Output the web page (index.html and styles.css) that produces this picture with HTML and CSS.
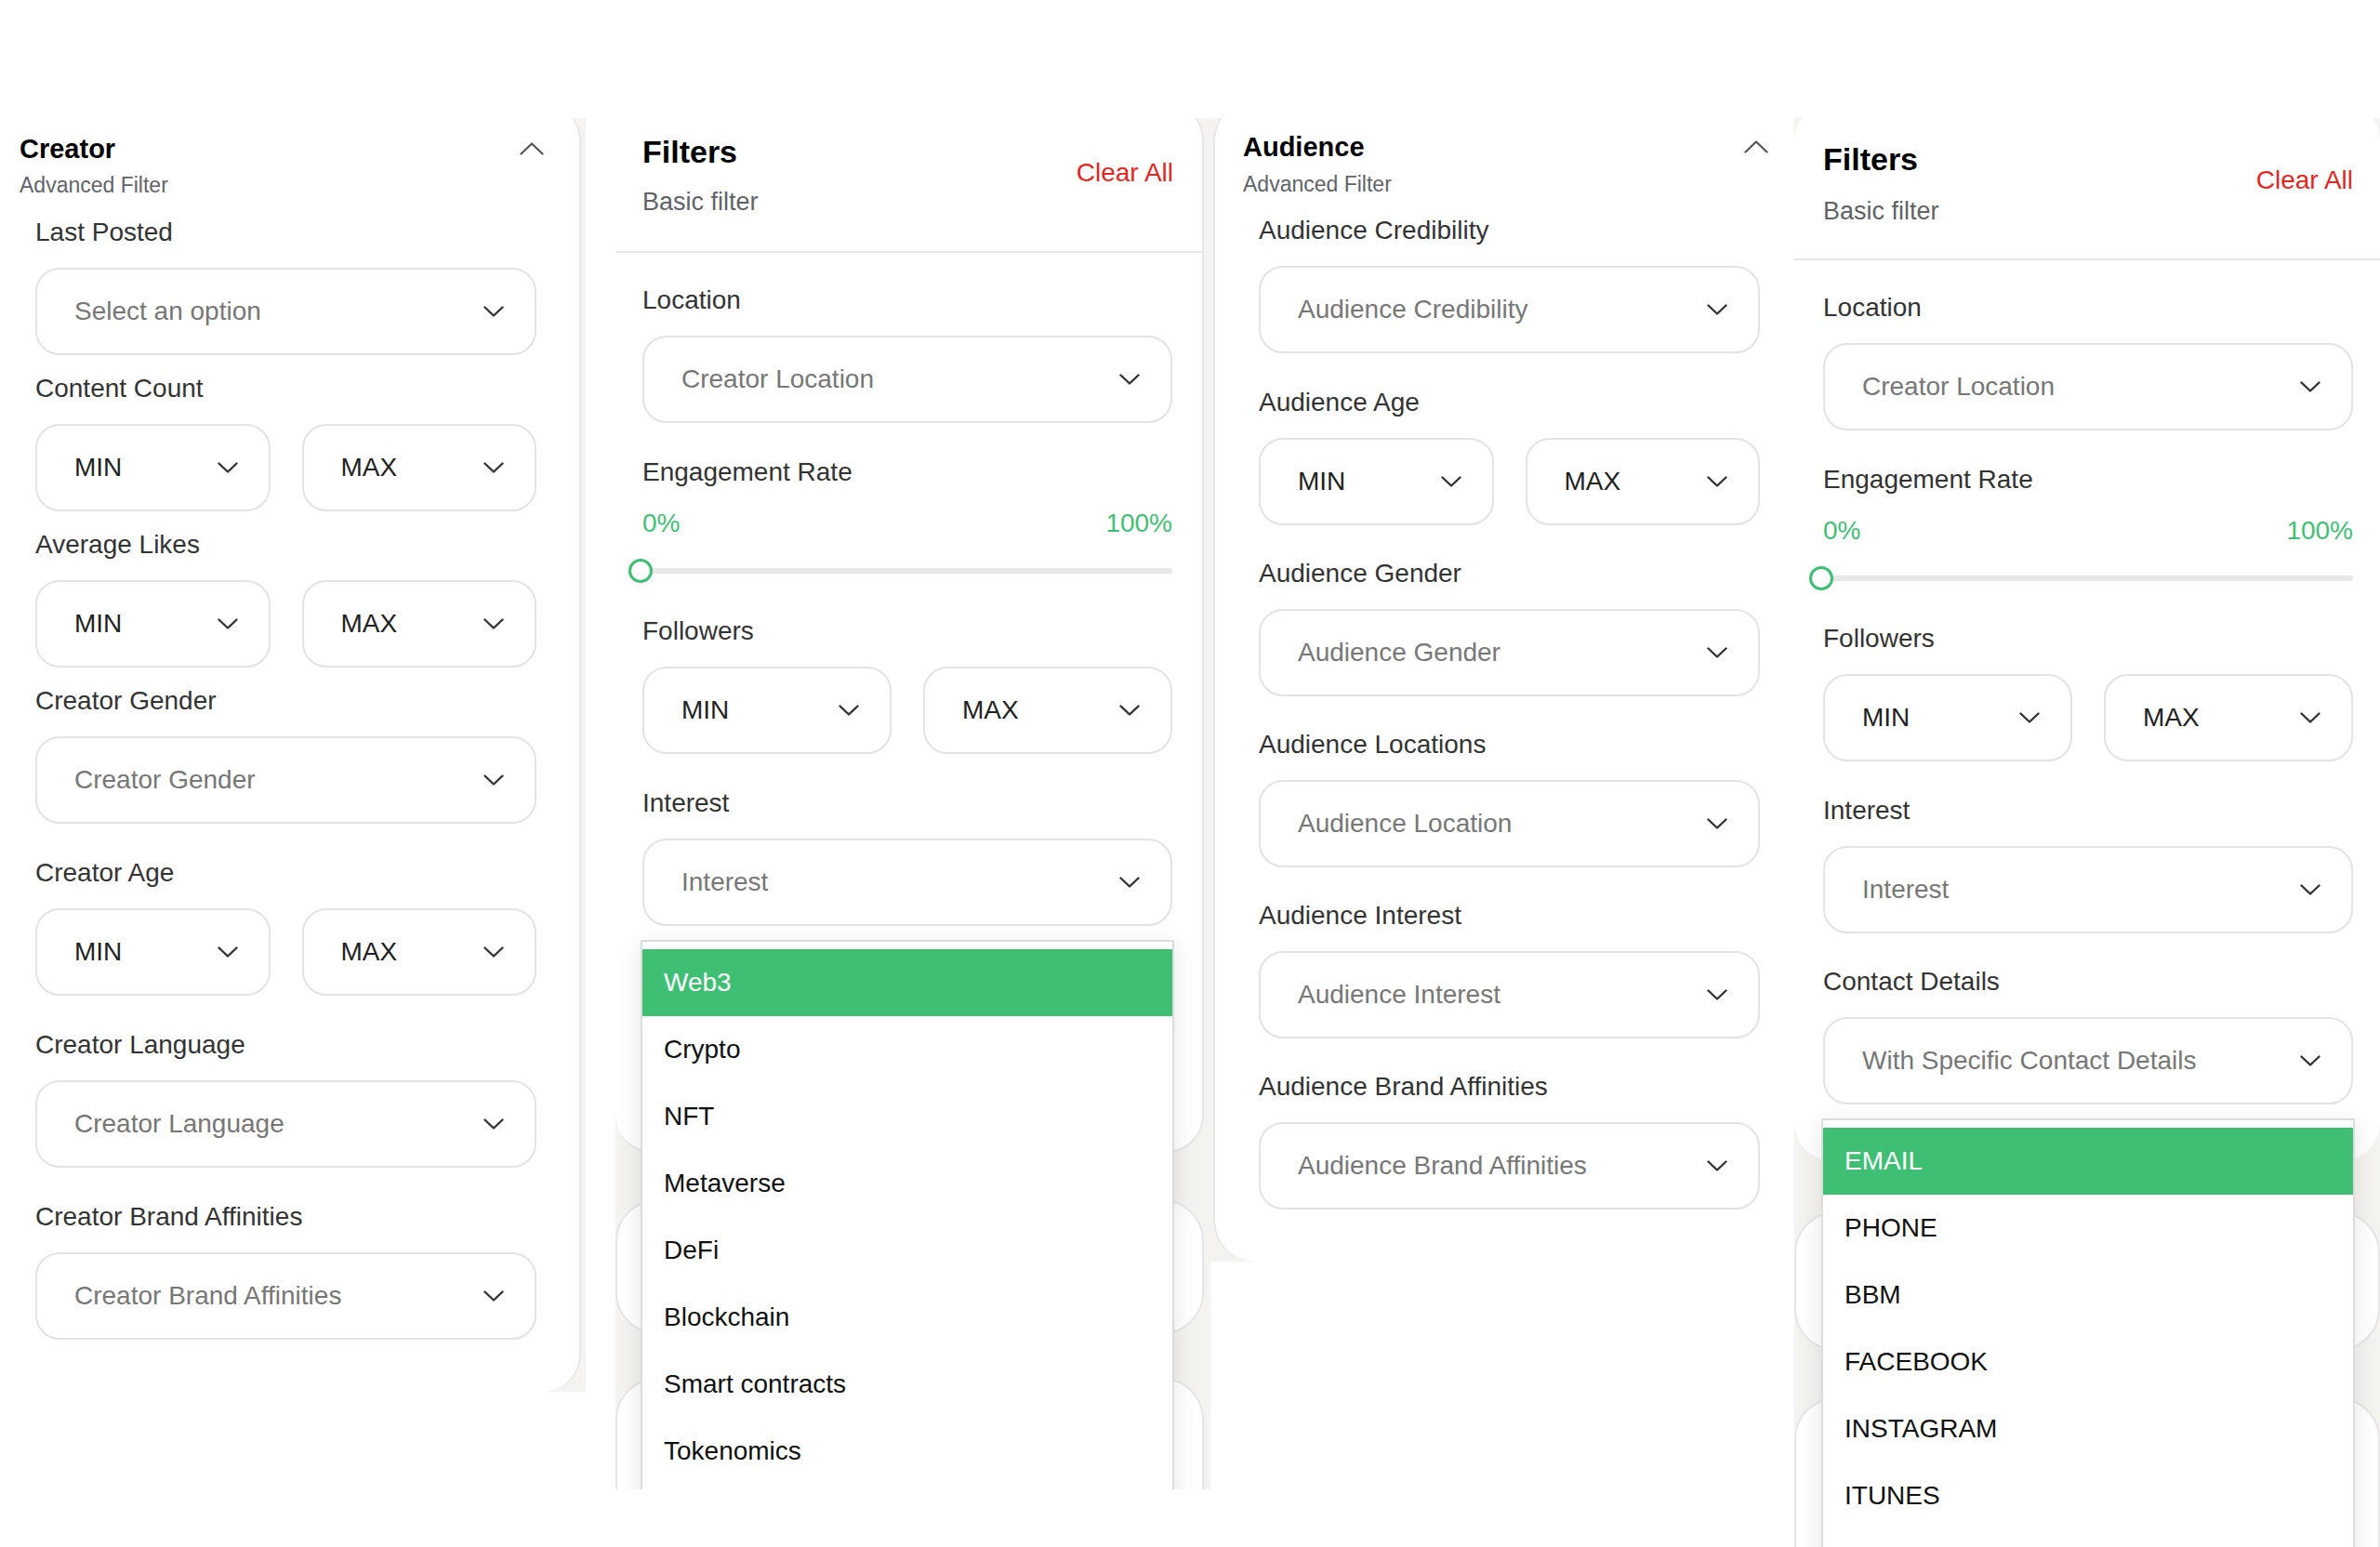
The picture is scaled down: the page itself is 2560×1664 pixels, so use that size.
FILE: index.html
```html
<!DOCTYPE html>
<html lang="en">
<head>
<meta charset="utf-8">
<title>Filters</title>
<link rel="stylesheet" href="styles.css">
</head>
<body>
<div class="board">

  <!-- Shot 1: Creator advanced filter -->
  <section class="shot shot-1">
    <div class="card card-creator">
      <header class="adv-head">
        <div>
          <h2 class="adv-title">Creator</h2>
          <p class="adv-sub">Advanced Filter</p>
        </div>
        <svg class="chev-up" viewBox="0 0 26 14" width="26" height="14"><path d="M1.5 12.5 L13 1.5 L24.5 12.5"/></svg>
      </header>
      <div class="adv-body">
        <div class="field first">
          <label class="lbl">Last Posted</label>
          <div class="select"><span class="ph">Select an option</span><svg class="chev" viewBox="0 0 22 12" width="22" height="12"><path d="M1.5 1.5 L11 10.5 L20.5 1.5"/></svg></div>
        </div>
        <div class="field tight">
          <label class="lbl">Content Count</label>
          <div class="pair">
            <div class="select"><span class="val">MIN</span><svg class="chev" viewBox="0 0 22 12" width="22" height="12"><path d="M1.5 1.5 L11 10.5 L20.5 1.5"/></svg></div>
            <div class="select"><span class="val">MAX</span><svg class="chev" viewBox="0 0 22 12" width="22" height="12"><path d="M1.5 1.5 L11 10.5 L20.5 1.5"/></svg></div>
          </div>
        </div>
        <div class="field tight">
          <label class="lbl">Average Likes</label>
          <div class="pair">
            <div class="select"><span class="val">MIN</span><svg class="chev" viewBox="0 0 22 12" width="22" height="12"><path d="M1.5 1.5 L11 10.5 L20.5 1.5"/></svg></div>
            <div class="select"><span class="val">MAX</span><svg class="chev" viewBox="0 0 22 12" width="22" height="12"><path d="M1.5 1.5 L11 10.5 L20.5 1.5"/></svg></div>
          </div>
        </div>
        <div class="field tight">
          <label class="lbl">Creator Gender</label>
          <div class="select"><span class="ph">Creator Gender</span><svg class="chev" viewBox="0 0 22 12" width="22" height="12"><path d="M1.5 1.5 L11 10.5 L20.5 1.5"/></svg></div>
        </div>
        <div class="field">
          <label class="lbl">Creator Age</label>
          <div class="pair">
            <div class="select"><span class="val">MIN</span><svg class="chev" viewBox="0 0 22 12" width="22" height="12"><path d="M1.5 1.5 L11 10.5 L20.5 1.5"/></svg></div>
            <div class="select"><span class="val">MAX</span><svg class="chev" viewBox="0 0 22 12" width="22" height="12"><path d="M1.5 1.5 L11 10.5 L20.5 1.5"/></svg></div>
          </div>
        </div>
        <div class="field">
          <label class="lbl">Creator Language</label>
          <div class="select"><span class="ph">Creator Language</span><svg class="chev" viewBox="0 0 22 12" width="22" height="12"><path d="M1.5 1.5 L11 10.5 L20.5 1.5"/></svg></div>
        </div>
        <div class="field">
          <label class="lbl">Creator Brand Affinities</label>
          <div class="select"><span class="ph">Creator Brand Affinities</span><svg class="chev" viewBox="0 0 22 12" width="22" height="12"><path d="M1.5 1.5 L11 10.5 L20.5 1.5"/></svg></div>
        </div>
      </div>
    </div>
  </section>

  <!-- Shot 2: Basic filters with Interest menu open -->
  <section class="shot shot-2">
    <div class="card card-basic card-basic-a">
      <header class="basic-head">
        <div>
          <h2 class="basic-title">Filters</h2>
          <p class="basic-sub">Basic filter</p>
        </div>
        <span class="clear">Clear All</span>
      </header>
      <div class="basic-body">
        <div class="field first">
          <label class="lbl">Location</label>
          <div class="select"><span class="ph">Creator Location</span><svg class="chev" viewBox="0 0 22 12" width="22" height="12"><path d="M1.5 1.5 L11 10.5 L20.5 1.5"/></svg></div>
        </div>
        <div class="field">
          <label class="lbl">Engagement Rate</label>
          <div class="pct"><span>0%</span><span>100%</span></div>
          <div class="range"><span class="thumb"></span></div>
        </div>
        <div class="field mid">
          <label class="lbl">Followers</label>
          <div class="pair">
            <div class="select"><span class="val">MIN</span><svg class="chev" viewBox="0 0 22 12" width="22" height="12"><path d="M1.5 1.5 L11 10.5 L20.5 1.5"/></svg></div>
            <div class="select"><span class="val">MAX</span><svg class="chev" viewBox="0 0 22 12" width="22" height="12"><path d="M1.5 1.5 L11 10.5 L20.5 1.5"/></svg></div>
          </div>
        </div>
        <div class="field has-menu">
          <label class="lbl">Interest</label>
          <div class="select"><span class="ph">Interest</span><svg class="chev" viewBox="0 0 22 12" width="22" height="12"><path d="M1.5 1.5 L11 10.5 L20.5 1.5"/></svg></div>
          <ul class="menu">
            <li class="item active">Web3</li>
            <li class="item">Crypto</li>
            <li class="item">NFT</li>
            <li class="item">Metaverse</li>
            <li class="item">DeFi</li>
            <li class="item">Blockchain</li>
            <li class="item">Smart contracts</li>
            <li class="item">Tokenomics</li>
          </ul>
        </div>
      </div>
    </div>
    <div class="ghost ghost-a1"></div>
    <div class="ghost ghost-a2"></div>
  </section>

  <!-- Shot 3: Audience advanced filter -->
  <section class="shot shot-3">
    <div class="card card-audience">
      <header class="adv-head aud-head">
        <div>
          <h2 class="adv-title">Audience</h2>
          <p class="adv-sub">Advanced Filter</p>
        </div>
        <svg class="chev-up" viewBox="0 0 26 14" width="26" height="14"><path d="M1.5 12.5 L13 1.5 L24.5 12.5"/></svg>
      </header>
      <div class="aud-body">
        <div class="field first">
          <label class="lbl">Audience Credibility</label>
          <div class="select"><span class="ph">Audience Credibility</span><svg class="chev" viewBox="0 0 22 12" width="22" height="12"><path d="M1.5 1.5 L11 10.5 L20.5 1.5"/></svg></div>
        </div>
        <div class="field">
          <label class="lbl">Audience Age</label>
          <div class="pair">
            <div class="select"><span class="val">MIN</span><svg class="chev" viewBox="0 0 22 12" width="22" height="12"><path d="M1.5 1.5 L11 10.5 L20.5 1.5"/></svg></div>
            <div class="select"><span class="val">MAX</span><svg class="chev" viewBox="0 0 22 12" width="22" height="12"><path d="M1.5 1.5 L11 10.5 L20.5 1.5"/></svg></div>
          </div>
        </div>
        <div class="field mid">
          <label class="lbl">Audience Gender</label>
          <div class="select"><span class="ph">Audience Gender</span><svg class="chev" viewBox="0 0 22 12" width="22" height="12"><path d="M1.5 1.5 L11 10.5 L20.5 1.5"/></svg></div>
        </div>
        <div class="field mid">
          <label class="lbl">Audience Locations</label>
          <div class="select"><span class="ph">Audience Location</span><svg class="chev" viewBox="0 0 22 12" width="22" height="12"><path d="M1.5 1.5 L11 10.5 L20.5 1.5"/></svg></div>
        </div>
        <div class="field mid">
          <label class="lbl">Audience Interest</label>
          <div class="select"><span class="ph">Audience Interest</span><svg class="chev" viewBox="0 0 22 12" width="22" height="12"><path d="M1.5 1.5 L11 10.5 L20.5 1.5"/></svg></div>
        </div>
        <div class="field mid">
          <label class="lbl">Audience Brand Affinities</label>
          <div class="select"><span class="ph">Audience Brand Affinities</span><svg class="chev" viewBox="0 0 22 12" width="22" height="12"><path d="M1.5 1.5 L11 10.5 L20.5 1.5"/></svg></div>
        </div>
      </div>
    </div>
  </section>

  <!-- Shot 4: Basic filters with Contact Details menu open -->
  <section class="shot shot-4">
    <div class="card card-basic card-basic-b">
      <header class="basic-head">
        <div>
          <h2 class="basic-title">Filters</h2>
          <p class="basic-sub">Basic filter</p>
        </div>
        <span class="clear">Clear All</span>
      </header>
      <div class="basic-body">
        <div class="field first">
          <label class="lbl">Location</label>
          <div class="select"><span class="ph">Creator Location</span><svg class="chev" viewBox="0 0 22 12" width="22" height="12"><path d="M1.5 1.5 L11 10.5 L20.5 1.5"/></svg></div>
        </div>
        <div class="field">
          <label class="lbl">Engagement Rate</label>
          <div class="pct"><span>0%</span><span>100%</span></div>
          <div class="range"><span class="thumb"></span></div>
        </div>
        <div class="field mid">
          <label class="lbl">Followers</label>
          <div class="pair">
            <div class="select"><span class="val">MIN</span><svg class="chev" viewBox="0 0 22 12" width="22" height="12"><path d="M1.5 1.5 L11 10.5 L20.5 1.5"/></svg></div>
            <div class="select"><span class="val">MAX</span><svg class="chev" viewBox="0 0 22 12" width="22" height="12"><path d="M1.5 1.5 L11 10.5 L20.5 1.5"/></svg></div>
          </div>
        </div>
        <div class="field">
          <label class="lbl">Interest</label>
          <div class="select"><span class="ph">Interest</span><svg class="chev" viewBox="0 0 22 12" width="22" height="12"><path d="M1.5 1.5 L11 10.5 L20.5 1.5"/></svg></div>
        </div>
        <div class="field mid has-menu">
          <label class="lbl">Contact Details</label>
          <div class="select"><span class="ph">With Specific Contact Details</span><svg class="chev" viewBox="0 0 22 12" width="22" height="12"><path d="M1.5 1.5 L11 10.5 L20.5 1.5"/></svg></div>
          <ul class="menu menu-b">
            <li class="item active">EMAIL</li>
            <li class="item">PHONE</li>
            <li class="item">BBM</li>
            <li class="item">FACEBOOK</li>
            <li class="item">INSTAGRAM</li>
            <li class="item">ITUNES</li>
          </ul>
        </div>
      </div>
    </div>
    <div class="ghost ghost-b1"></div>
    <div class="ghost ghost-b2"></div>
  </section>

</div>
</body>
</html>
```

FILE: styles.css
```css
* {
  box-sizing: border-box;
  margin: 0;
  padding: 0;
}

html, body {
  width: 2560px;
  height: 1664px;
  overflow: hidden;
  background: #ffffff;
}

body {
  font-family: "Liberation Sans", Arial, sans-serif;
  color: #333333;
}

.board {
  display: flex;
  align-items: flex-start;
  padding-top: 127px;
}

/* each cropped screenshot */
.shot {
  position: relative;
  flex: none;
  overflow: hidden;
  background: #f5f3f0;
}
.shot-1 { width: 630px; height: 1370px; }
.shot-2 { width: 640px; height: 1475px; margin-left: 32px; }
.shot-3 { width: 628px; height: 1230px; }
.shot-4 { width: 630px; height: 1537px; }

.card {
  background: #ffffff;
  margin-top: -16px;
}

.card-creator {
  width: 625px;
  height: 1386px;
  border-right: 2px solid #e6e6ea;
  border-radius: 0 40px 40px 0;
}

.card-basic-a {
  width: 633px;
  height: 1129px;
  border-right: 2px solid #e6e6ea;
  border-bottom: 2px solid #e6e6ea;
  border-radius: 0 40px 40px 40px;
}

.card-audience {
  width: 625px;
  height: 1246px;
  margin-left: 3px;
  border-left: 2px solid #e6e6ea;
  border-radius: 40px 0 0 45px;
}

.card-basic-b {
  width: 630px;
  height: 1137px;
  border-radius: 40px;
}

/* ghost cards peeking behind open menus */
.ghost {
  background: #ffffff;
  border: 2px solid #e6e6ea;
  border-radius: 45px;
}
.ghost-a1 { width: 633px; height: 145px; margin-top: 50px; }
.ghost-a2 { width: 633px; height: 300px; margin-top: 47px; }
.ghost-b1 { width: 630px; height: 150px; margin-top: 55px; }
.ghost-b2 { width: 630px; height: 300px; margin-top: 50px; }

/* advanced filter header */
.adv-head {
  display: flex;
  justify-content: space-between;
  align-items: flex-start;
  padding: 31px 38px 0 21px;
}
.aud-head {
  padding: 29px 28px 0 30px;
}
.adv-title {
  font-size: 29px;
  line-height: 36px;
  font-weight: 700;
  color: #000000;
}
.adv-sub {
  margin-top: 7px;
  font-size: 23px;
  line-height: 28px;
  color: #5f6368;
}
.aud-head .adv-sub { margin-top: 8px; }

.chev-up {
  margin-top: 11px;
  fill: none;
  stroke: #555555;
  stroke-width: 2.2;
  stroke-linecap: round;
  stroke-linejoin: round;
}

.adv-body {
  padding: 0 46px 0 38px;
}
.aud-body {
  padding: 0 37px 0 47px;
}

/* basic filter header */
.basic-head {
  display: flex;
  justify-content: space-between;
  align-items: flex-start;
  padding: 32px 31px 36px 29px;
  border-bottom: 2px solid #e8e8ec;
}
.card-basic-b .basic-head {
  padding: 40px 29px 34px 31px;
}
.basic-title {
  font-size: 34px;
  line-height: 40px;
  font-weight: 700;
  color: #000000;
}
.basic-sub {
  margin-top: 17px;
  font-size: 27px;
  line-height: 34px;
  color: #5f6368;
}
.card-basic-b .basic-sub { margin-top: 19px; }
.clear {
  margin-top: 29px;
  font-size: 28px;
  line-height: 28px;
  color: #e3261f;
}

.basic-body {
  padding: 34px 32px 0 29px;
}
.card-basic-b .basic-body {
  padding: 34px 29px 0 31px;
}

/* fields */
.field { margin-top: 36px; }
.field.first { margin-top: 20px; }
.basic-body .field.first { margin-top: 0; }
.aud-body .field.first { margin-top: 19px; }
.field.tight { margin-top: 19px; }
.field.mid { margin-top: 35px; }
.has-menu { position: relative; }

.lbl {
  display: block;
  font-size: 28px;
  line-height: 34px;
  color: #333333;
}

.select {
  margin-top: 21px;
  height: 94px;
  border: 2px solid #e3e3e3;
  border-radius: 26px;
  background: #ffffff;
  display: flex;
  align-items: center;
  justify-content: space-between;
  padding: 0 33px 0 40px;
  font-size: 28px;
}
.pair {
  display: flex;
  gap: 34px;
}
.pair .select { flex: 1; }

.ph { color: #777777; }
.val { color: #222222; }

.chev {
  flex: none;
  fill: none;
  stroke: #333333;
  stroke-width: 2.4;
  stroke-linecap: round;
  stroke-linejoin: round;
}

/* engagement slider */
.pct {
  margin-top: 21px;
  display: flex;
  justify-content: space-between;
  font-size: 28px;
  line-height: 34px;
  color: #3fbf74;
}
.range {
  position: relative;
  margin-top: 21px;
  height: 26px;
}
.range::before {
  content: "";
  position: absolute;
  left: 0;
  right: 0;
  top: 10px;
  height: 6px;
  border-radius: 3px;
  background: #e8e8e8;
}
.thumb {
  position: absolute;
  left: -15px;
  top: 0;
  width: 26px;
  height: 26px;
  border: 3px solid #3fbf74;
  border-radius: 50%;
  background: #ffffff;
}

/* open dropdown menus */
.menu {
  position: absolute;
  left: -2px;
  right: -2px;
  top: calc(100% + 15px);
  z-index: 5;
  list-style: none;
  min-height: 720px;
  padding-top: 8px;
  background: #ffffff;
  border: 2px solid #dcdcdc;
  border-bottom: none;
  box-shadow: 0 6px 26px rgba(0, 0, 0, 0.10);
}
.item {
  height: 72px;
  display: flex;
  align-items: center;
  padding-left: 23px;
  font-size: 28px;
  color: #111111;
}
.item.active {
  background: #3fbf74;
  color: #ffffff;
}
```
